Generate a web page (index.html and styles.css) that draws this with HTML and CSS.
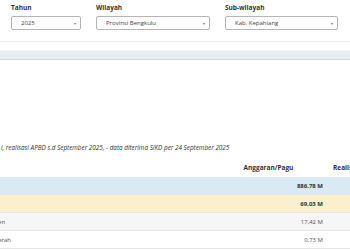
FILE: index.html
```html
<!DOCTYPE html>
<html>
<head>
  <meta name="viewport" content="width=device-width, initial-scale=1.0">
  <link rel="stylesheet" href="styles.css">
</head>
<body>
  <div class="filters">
    <div class="field field-year">
      <label>Tahun</label>
      <div class="select"><span>2025</span><span class="caret">&#9662;</span></div>
    </div>
    <div class="field field-region">
      <label>Wilayah</label>
      <div class="select"><span>Provinsi Bengkulu</span><span class="caret">&#9662;</span></div>
    </div>
    <div class="field field-sub">
      <label>Sub-wilayah</label>
      <div class="select"><span>Kab. Kepahiang</span><span class="caret">&#9662;</span></div>
    </div>
  </div>

  <div class="tabs"></div>

  <div class="content">
    <p class="note">i, realisasi APBD s.d September 2025, - data diterima SIKD per 24 September 2025</p>

    <div class="inner">
      <table class="apbd">
        <thead>
          <tr>
            <th class="col-label"></th>
            <th class="col-pagu">Anggaran/Pagu</th>
            <th class="col-real">Realisasi</th>
          </tr>
        </thead>
        <tbody>
          <tr class="row-total">
            <td>Pendapatan Daerah</td>
            <td class="num">886,78 M</td>
            <td class="num"></td>
          </tr>
          <tr class="row-group">
            <td class="lvl-1">PAD</td>
            <td class="num">69,03 M</td>
            <td class="num"></td>
          </tr>
          <tr class="row-odd">
            <td class="lvl-2">Pajak Daerah Kabupaten</td>
            <td class="num">17,42 M</td>
            <td class="num"></td>
          </tr>
          <tr>
            <td class="lvl-3">Retribusi Daerah</td>
            <td class="num">0,73 M</td>
            <td class="num"></td>
          </tr>
        </tbody>
      </table>
    </div>
  </div>
</body>
</html>
```

FILE: styles.css
```css
html, body {
  margin: 0;
  padding: 0;
  background: #fff;
  overflow: hidden;
}

body {
  width: 350px;
  height: 250px;
  font-family: "Open Sans", "DejaVu Sans", sans-serif;
  color: #333;
}

.filters {
  display: flex;
  gap: 15px;
  padding: 3px 10px 0 11px;
  height: 42px;
  border-bottom: 1px solid #ececec;
  box-sizing: border-box;
}

.field label {
  display: block;
  font-size: 6.5px;
  font-weight: bold;
  line-height: 10px;
  color: #333;
  margin-bottom: 3px;
}

.field-year { width: 70px; }
.field-region { width: 114px; }
.field-sub { width: 113px; }

.select {
  display: flex;
  justify-content: space-between;
  align-items: center;
  height: 14px;
  box-sizing: border-box;
  border: 1px solid #b5b5b5;
  border-radius: 2px;
  padding: 0 4px 0 9px;
  font-size: 6px;
  color: #444;
}

.caret {
  font-size: 4px;
  color: #777;
}

.tabs {
  margin-top: 8px;
  height: 10px;
  background: #e9edf3;
  border-top: 1px solid #eef1f5;
  border-bottom: 1px solid #d3d9e2;
  box-sizing: border-box;
}

.content {
  overflow: hidden;
  padding-top: 82px;
}

.inner {
  margin-left: -100px;
}

.note {
  margin: 0;
  padding-left: 1px;
  font-size: 6.35px;
  font-style: italic;
  line-height: 12px;
  color: #333;
  white-space: nowrap;
}

.apbd {
  margin-top: 3px;
  border-collapse: collapse;
  table-layout: fixed;
  width: 510px;
  font-size: 6px;
}

.apbd th {
  height: 20px;
  font-size: 6.5px;
  font-weight: bold;
  color: #333;
  padding: 0;
}

.col-label { width: 307px; }
.col-pagu { width: 123px; text-align: center; }
.col-real { width: 80px; text-align: left; padding-left: 3px !important; }

.apbd td {
  height: 17px;
  padding: 0 7px 0 3px;
  border-bottom: 1px solid #e6e6e6;
  color: #555;
  white-space: nowrap;
}

.apbd td.num {
  text-align: right;
}

.apbd td.lvl-1 { padding-left: 12px; }
.apbd td.lvl-2 { padding-left: 36px; }
.apbd td.lvl-3 { padding-left: 64px; }

.row-total td {
  background: #d9eaf5;
  font-weight: bold;
  color: #333;
}

.row-group td {
  background: #fbf0cd;
  font-weight: bold;
  color: #333;
}

.row-odd td {
  background: #f6f6f6;
}
```
